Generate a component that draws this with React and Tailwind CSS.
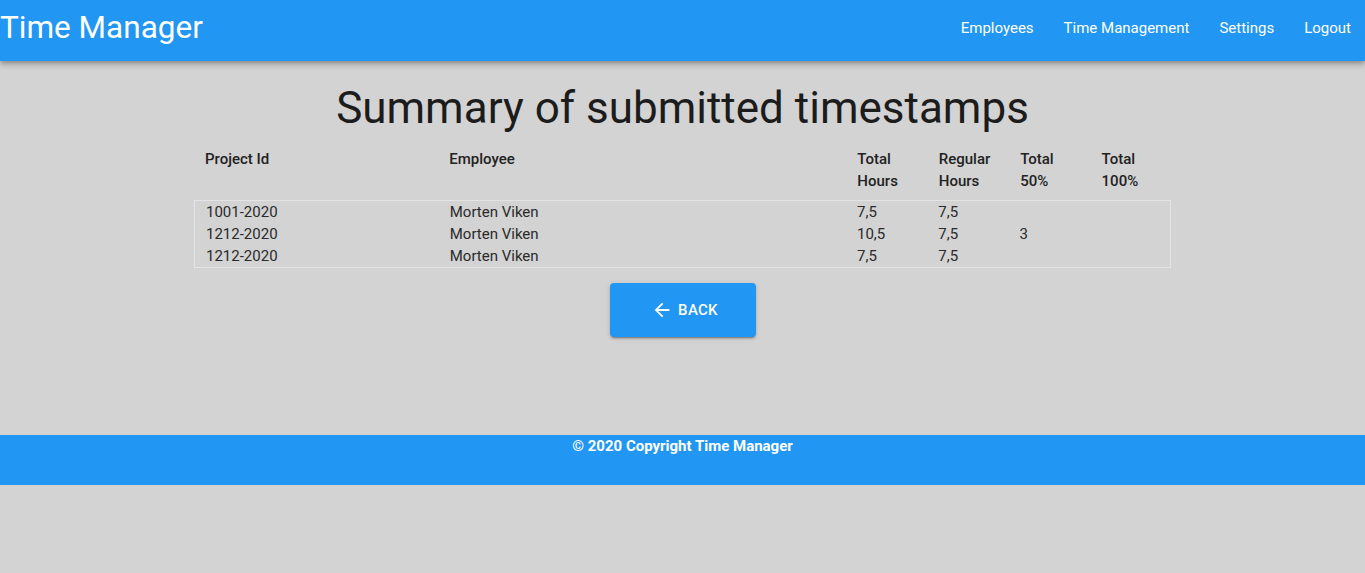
import React from "react";

const rows = [
  ["1001-2020", "Morten Viken", "7,5", "7,5", "", ""],
  ["1212-2020", "Morten Viken", "10,5", "7,5", "3", ""],
  ["1212-2020", "Morten Viken", "7,5", "7,5", "", ""],
];

function Row({ cells }) {
  return (
    <div className="grid grid-cols-12">
      <div className="col-span-3 pl-[11px]">{cells[0]}</div>
      <div className="col-span-5 pl-[11px]">{cells[1]}</div>
      <div className="col-span-1 pl-[12px]">{cells[2]}</div>
      <div className="col-span-1 pl-[12px]">{cells[3]}</div>
      <div className="col-span-1 pl-[12px]">{cells[4]}</div>
      <div className="col-span-1 pl-[12px]">{cells[5]}</div>
    </div>
  );
}

export default function App() {
  return (
    <div
      className="min-h-[573px] bg-[#d3d3d3] text-[rgba(0,0,0,0.87)]"
      style={{ fontFamily: "Roboto, 'Liberation Sans', sans-serif" }}
    >
      <header className="h-[61px] bg-[#2196f3] flex items-center justify-between shadow-[0_2px_4px_-1px_rgba(0,0,0,0.2),0_4px_5px_0_rgba(0,0,0,0.14),0_1px_10px_0_rgba(0,0,0,0.12)] relative z-10">
        <div className="text-white text-[31.5px] leading-none font-normal pb-[5px]">Time Manager</div>
        <nav className="flex items-center pr-[14px] pb-[4px] text-white text-[15px] gap-[30px]">
          <span>Employees</span>
          <span>Time Management</span>
          <span>Settings</span>
          <span>Logout</span>
        </nav>
      </header>

      <main className="flex flex-col items-center">
        <h1 className="mt-[19px] text-[44px] leading-[56px] font-normal text-[#1c1c1c]">
          Summary of submitted timestamps
        </h1>
        <div className="w-[977px] mt-[12px] text-[15px] leading-[22px]">
          <div className="font-medium text-[#222]">
            <Row
              cells={[
                "Project Id",
                "Employee",
                <>Total<br />Hours</>,
                <>Regular<br />Hours</>,
                <>Total<br />50%</>,
                <>Total<br />100%</>,
              ]}
            />
          </div>
          <div className="mt-[8px] border border-[#e4e4e4] text-[#2a2a2a]">
            {rows.map((r, i) => (
              <Row key={i} cells={r} />
            ))}
          </div>
        </div>
        <button className="mt-[15px] w-[146px] h-[54px] pl-[4px] bg-[#2196f3] text-white rounded-[4px] flex items-center justify-center text-[15px] font-medium tracking-[0.02em] shadow-[0_3px_1px_-2px_rgba(0,0,0,0.2),0_2px_2px_0_rgba(0,0,0,0.14),0_1px_5px_0_rgba(0,0,0,0.12)]">
          <svg viewBox="0 0 24 24" width="22" height="22" className="mr-[5px]" fill="currentColor">
            <path d="M20 11H7.83l5.59-5.59L12 4l-8 8 8 8 1.41-1.41L7.83 13H20v-2z" />
          </svg>
          BACK
        </button>
      </main>

      <footer className="mt-[98px] h-[50px] bg-[#2196f3] text-white text-center text-[15px] leading-[22px] font-bold">
        © 2020 Copyright Time Manager
      </footer>
    </div>
  );
}
